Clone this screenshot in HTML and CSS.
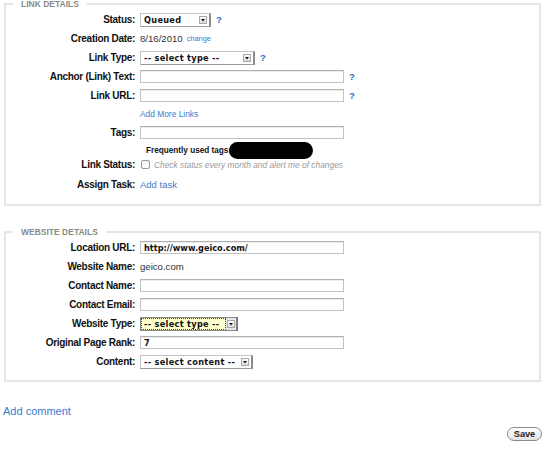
FILE: index.html
```html
<!DOCTYPE html>
<html lang="en">
<head>
<meta charset="utf-8">
<title>Link details</title>
<link rel="stylesheet" href="styles.css">
</head>
<body>
<div class="page">
  <fieldset class="panel panel-link">
    <legend>Link Details</legend>
    <div class="row">
      <span class="lbl">Status:</span>
      <span class="select w-status"><span class="sel-text">Queued</span><span class="sel-arrow"><svg viewBox="0 0 6 6" width="6" height="6"><path d="M1 2h4L3 4.5z" fill="#111"/></svg></span></span>
      <a class="help" href="#">?</a>
    </div>
    <div class="row">
      <span class="lbl">Creation Date:</span>
      <span class="value">8/16/2010</span>
      <a class="small-link" href="#">change</a>
    </div>
    <div class="row">
      <span class="lbl">Link Type:</span>
      <span class="select w-type"><span class="sel-text">-- select type --</span><span class="sel-arrow"><svg viewBox="0 0 6 6" width="6" height="6"><path d="M1 2h4L3 4.5z" fill="#111"/></svg></span></span>
      <a class="help" href="#">?</a>
    </div>
    <div class="row">
      <span class="lbl">Anchor (Link) Text:</span>
      <input class="text-input" type="text">
      <a class="help" href="#">?</a>
    </div>
    <div class="row">
      <span class="lbl">Link URL:</span>
      <input class="text-input" type="text">
      <a class="help" href="#">?</a>
    </div>
    <div class="row row-short">
      <span class="lbl"></span>
      <a class="more-link" href="#">Add More Links</a>
    </div>
    <div class="row row-short">
      <span class="lbl">Tags:</span>
      <input class="text-input" type="text">
    </div>
    <div class="row row-short">
      <span class="lbl"></span>
      <span class="freq">Frequently used tags:</span><span class="redacted"></span>
    </div>
    <div class="row row-tight">
      <span class="lbl">Link Status:</span>
      <span class="checkbox"></span>
      <span class="hint">Check status every month and alert me of changes</span>
    </div>
    <div class="row row-task">
      <span class="lbl">Assign Task:</span>
      <a class="task-link" href="#">Add task</a>
    </div>
  </fieldset>

  <fieldset class="panel panel-site">
    <legend>Website Details</legend>
    <div class="row">
      <span class="lbl">Location URL:</span>
      <input class="text-input mono" type="text" value="http://www.geico.com/">
    </div>
    <div class="row">
      <span class="lbl">Website Name:</span>
      <span class="value">geico.com</span>
    </div>
    <div class="row">
      <span class="lbl">Contact Name:</span>
      <input class="text-input" type="text">
    </div>
    <div class="row">
      <span class="lbl">Contact Email:</span>
      <input class="text-input" type="text">
    </div>
    <div class="row">
      <span class="lbl">Website Type:</span>
      <span class="select w-site focused"><span class="sel-text">-- select type --</span><span class="sel-arrow"><svg viewBox="0 0 6 6" width="6" height="6"><path d="M1 2h4L3 4.5z" fill="#111"/></svg></span></span>
    </div>
    <div class="row">
      <span class="lbl">Original Page Rank:</span>
      <input class="text-input mono" type="text" value="7">
    </div>
    <div class="row">
      <span class="lbl">Content:</span>
      <span class="select w-content"><span class="sel-text">-- select content --</span><span class="sel-arrow"><svg viewBox="0 0 6 6" width="6" height="6"><path d="M1 2h4L3 4.5z" fill="#111"/></svg></span></span>
    </div>
  </fieldset>

  <a class="comment-link" href="#">Add comment</a>
  <div class="actions">
    <button class="save" type="button">Save</button>
  </div>
</div>
</body>
</html>
```

FILE: styles.css
```css
html, body {
  margin: 0;
  padding: 0;
  background: #fff;
}

body {
  font-family: "Liberation Sans", Arial, sans-serif;
  color: #222;
  width: 550px;
  height: 466px;
  overflow: hidden;
}

.page {
  margin-top: -2px;
  padding: 0 8px 0 3px;
}

.panel {
  box-sizing: border-box;
  width: 537px;
  margin: 0 0 0 1px;
  border: 2px solid #e6e6e6;
  padding: 0 7px 10px 7px;
  min-width: 0;
}

.panel-site {
  margin-top: 20px;
  padding-bottom: 9px;
}

.panel legend {
  padding: 0 8px;
  font-size: 8.5px;
  line-height: 12px;
  font-weight: bold;
  text-transform: uppercase;
  color: #8a8a8a;
}

.row {
  display: flex;
  align-items: center;
  height: 19px;
}

.row-short {
  height: 18px;
}

.row-tight {
  height: 11px;
}

.row-task {
  margin-top: 5px;
}

.lbl {
  flex: none;
  width: 122px;
  margin-right: 5px;
  text-align: right;
  font-size: 10px;
  letter-spacing: -0.3px;
  font-weight: bold;
  color: #111;
  white-space: nowrap;
}

.value {
  font-size: 9.6px;
  color: #333;
}

.small-link {
  margin-left: 4px;
  font-size: 7.4px;
  color: #3a7bd0;
  text-decoration: none;
}

.help {
  margin-left: 5px;
  font-size: 9.5px;
  font-weight: bold;
  color: #2f6cc4;
  text-decoration: none;
}

.text-input {
  box-sizing: border-box;
  width: 204px;
  height: 13px;
  margin: 0;
  padding: 0 3px;
  border: 1px solid #c2c2c2;
  border-top-color: #b0b0b0;
  box-shadow: inset 0 1px 0 #ececec;
  background: #fff;
  font-family: "DejaVu Sans", Verdana, sans-serif;
  font-size: 8.2px;
  font-weight: bold;
  color: #111;
  outline: none;
}

.select {
  box-sizing: border-box;
  display: inline-flex;
  align-items: center;
  height: 14px;
  border: 1px solid #c4c4c4;
  border-right: 2px solid #8c8c8c;
  border-bottom-color: #9a9a9a;
  background: #fff;
  padding-right: 2px;
}

.sel-text {
  flex: 1;
  height: 100%;
  display: flex;
  align-items: center;
  padding-left: 3px;
  font-family: "DejaVu Sans", Verdana, sans-serif;
  font-size: 8.2px;
  letter-spacing: 0.3px;
  font-weight: bold;
  color: #111;
  white-space: nowrap;
}

.sel-arrow {
  box-sizing: border-box;
  flex: none;
  display: flex;
  align-items: center;
  justify-content: center;
  width: 8px;
  height: 8px;
  border: 1px solid #a8a8a8;
  background: linear-gradient(#ffffff, #dcdcdc);
}

.w-status { width: 71px; }
.w-type { width: 115px; }
.w-site { width: 98px; }
.w-content { width: 113px; }

.select.focused {
  border-color: #8a8a8a;
  border-right-color: #7a7a7a;
  background: #e9e9e9;
  padding: 0 1px 0 0;
}

.select.focused .sel-text {
  box-sizing: border-box;
  padding-left: 2px;
  background: #ffffcc;
  border: 1px dotted #444;
  margin-right: 1px;
}

.more-link {
  font-size: 8.4px;
  color: #3a7bd0;
  text-decoration: none;
}

.freq {
  margin-left: 6px;
  font-size: 8.2px;
  font-weight: bold;
  color: #111;
}

.redacted {
  display: inline-block;
  width: 84px;
  height: 17px;
  margin-left: -2px;
  border-radius: 9px;
  background: #000;
}

.checkbox {
  box-sizing: border-box;
  width: 9px;
  height: 9px;
  margin-left: 1px;
  border: 1px solid #9a9a9a;
  border-radius: 2px;
  background: linear-gradient(#f4f4f4, #fff);
}

.hint {
  margin-left: 4px;
  font-size: 8.4px;
  font-style: italic;
  color: #9a9a9a;
}

.task-link {
  font-size: 9.5px;
  color: #3a7bd0;
  text-decoration: none;
}

.comment-link {
  display: block;
  width: max-content;
  margin-top: 22px;
  font-size: 11px;
  line-height: 14px;
  color: #3a7bd0;
  text-decoration: none;
}

.actions {
  display: flex;
  justify-content: flex-end;
  margin-top: 9px;
}

.save {
  box-sizing: border-box;
  width: 35px;
  height: 14px;
  padding: 0;
  border: 1px solid #8a8a8a;
  border-radius: 7px;
  background: linear-gradient(#ffffff, #e2e2e2);
  font-family: "Liberation Sans", Arial, sans-serif;
  font-size: 9.2px;
  font-weight: bold;
  line-height: 12px;
  color: #222;
}
```
